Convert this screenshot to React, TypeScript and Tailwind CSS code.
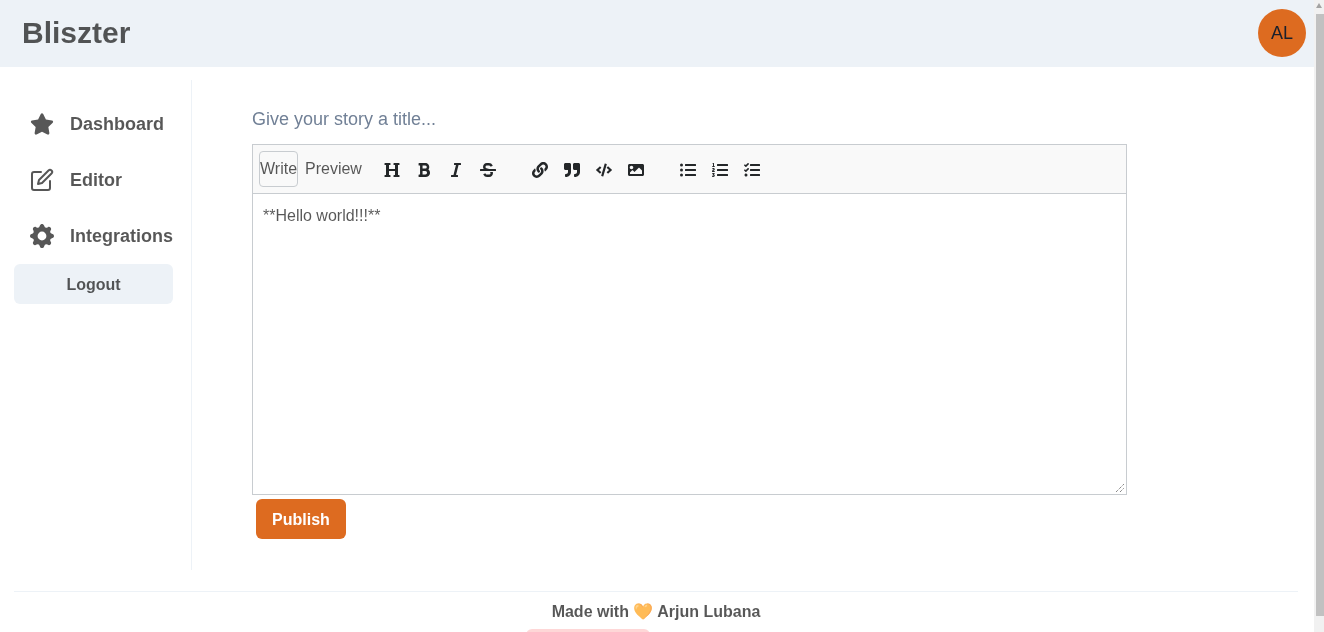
import React from 'react';
import { FaStar, FaHeading, FaBold, FaItalic, FaStrikethrough, FaLink, FaQuoteRight, FaCode, FaImage, FaListUl, FaListOl, FaTasks } from 'react-icons/fa';
import { BsGearFill } from 'react-icons/bs';
import { FiEdit } from 'react-icons/fi';

const NAV = [
  { label: 'Dashboard', Icon: FaStar, size: 24 },
  { label: 'Editor', Icon: FiEdit, size: 24 },
  { label: 'Integrations', Icon: BsGearFill, size: 24 },
];

const TOOL_GROUPS = [
  [FaHeading, FaBold, FaItalic, FaStrikethrough],
  [FaLink, FaQuoteRight, FaCode, FaImage],
  [FaListUl, FaListOl, FaTasks],
];

const App: React.FC = () => {
  return (
    <div className="h-screen overflow-hidden flex will-change-transform font-['Liberation_Sans',Arial,sans-serif] text-black/[0.66]">
      <div className="flex-1 min-w-0">
        {/* Header */}
        <header className="h-[67px] bg-[#edf2f7] flex items-center justify-between pl-[22px] pr-2 pb-0.5">
          <h1 className="text-[30px] font-bold">Bliszter</h1>
          <div className="w-12 h-12 rounded-full bg-[#dd6b20] flex items-center justify-center text-[#1a202c] text-lg">AL</div>
        </header>

        <div className="flex pt-[13px] pl-3.5">
          {/* Sidebar */}
          <aside className="w-[178px] h-[490px] border-r border-[#edf2f7] pt-4">
            {NAV.map(({ label, Icon, size }) => (
              <div key={label} className="h-14 flex items-center pl-4 gap-4">
                <Icon size={size} className="shrink-0" />
                <span className="text-lg font-bold">{label}</span>
              </div>
            ))}
            <button className="w-[159px] h-10 rounded-md bg-[#edf2f7] font-bold text-base pt-px">Logout</button>
          </aside>

          {/* Editor */}
          <main className="pl-[60px] pt-[26px]">
            <p className="text-lg leading-[27px] text-[#718096] mb-[11px]">Give your story a title...</p>
            <div className="w-[875px] h-[351px] border border-[#c8ccd0] flex flex-col">
              <div className="h-[49px] shrink-0 bg-[#f9f9f9] border-b border-[#c8ccd0] flex items-center pl-1.5">
                <span className="h-9 w-[39px] flex items-center justify-center border border-[#c8ccd0] rounded-sm text-base">Write</span>
                <span className="ml-[7px] text-base">Preview</span>
                <div className="flex ml-[22px] gap-9 pt-0.5 text-[#242729]">
                  {TOOL_GROUPS.map((group, idx) => (
                    <div key={idx} className="flex gap-4">
                      {group.map((Tool, i) => (
                        <span key={i} className="w-4 flex justify-center"><Tool size={16} /></span>
                      ))}
                    </div>
                  ))}
                </div>
              </div>
              <div className="flex-1 relative px-2.5 py-2.5 text-base leading-[24px]">
                **Hello world!!!**
                <svg className="absolute right-0.5 bottom-0.5" width="8" height="8" viewBox="0 0 8 8" stroke="#555" fill="none">
                  <path d="M0 8L8 0M4 8L8 4" strokeDasharray="1 1" />
                </svg>
              </div>
            </div>
            <button className="ml-1 mt-1 w-[90px] h-10 rounded-md bg-[#dd6b20] text-white font-bold text-base pt-0.5">Publish</button>
          </main>
        </div>

        {/* Footer */}
        <footer className="ml-3.5 mr-4 mt-[21px] border-t border-[#edf2f7] pt-2 flex flex-col items-center">
          <p className="font-bold text-base leading-6">Made with 🧡 Arjun Lubana</p>
          <div className="mt-[5px] w-[124px] h-6 rounded-md bg-[#fed7d7] -translate-x-[68px]" />
        </footer>
      </div>

      {/* Scrollbar */}
      <div className="w-[10px] shrink-0 bg-[#f1f1f1] flex flex-col items-end">
        <div className="h-[14px] w-full flex justify-center pt-[3px]">
          <svg width="6" height="5" viewBox="0 0 6 5" fill="#a3a3a3"><path d="M3 0L6 5H0z" /></svg>
        </div>
        <div className="w-2 h-[602px] bg-[#c1c1c1]" />
      </div>
    </div>
  );
};

export default App;
